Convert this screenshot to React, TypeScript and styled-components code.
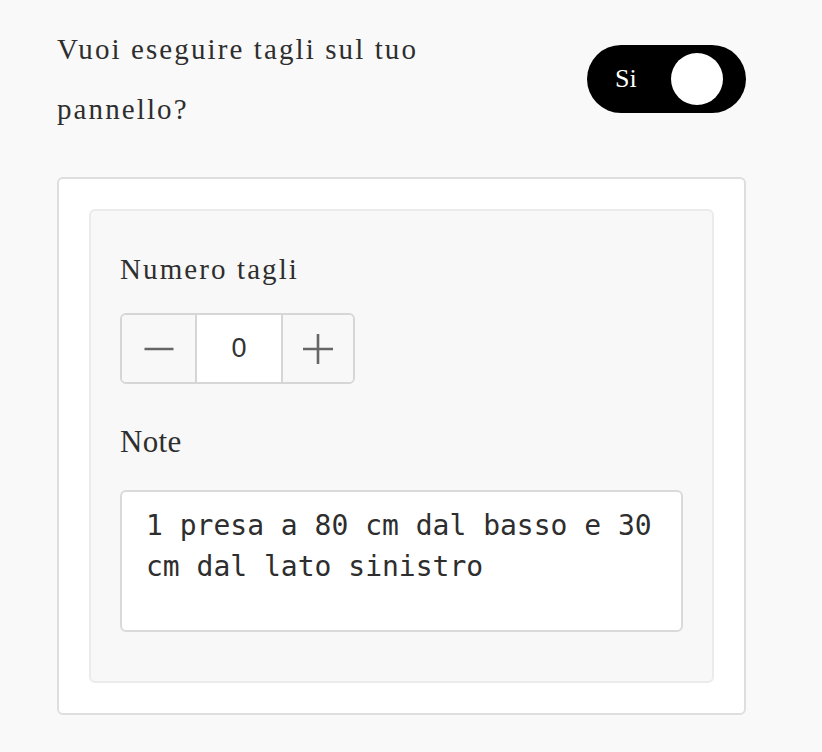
import React, { useState } from "react";
import styled, { createGlobalStyle } from "styled-components";

const GlobalStyle = createGlobalStyle`
  html, body {
    margin: 0;
    padding: 0;
    background: #f9f9f9;
  }
  body {
    font-family: "Liberation Serif", "Times New Roman", serif;
    color: #2e2e2e;
  }
`;

const Page = styled.div`
  padding: 19px 0 0 57px;
  width: 689px;
`;

const HeaderRow = styled.div`
  display: flex;
  align-items: center;
  justify-content: space-between;
`;

const Question = styled.div`
  flex: 0 1 420px;
  font-size: 29px;
  line-height: 60px;
  letter-spacing: 2.1px;
  color: #2e2e2e;
`;

const Toggle = styled.button<{ $on: boolean }>`
  width: 159px;
  height: 68px;
  border: none;
  border-radius: 34px;
  background: ${(p) => (p.$on ? "#000000" : "#cccccc")};
  display: flex;
  align-items: center;
  justify-content: space-between;
  padding: 0 23px 0 28px;
  box-sizing: border-box;
  cursor: pointer;
`;

const ToggleText = styled.span`
  font-family: "Liberation Serif", "Times New Roman", serif;
  font-size: 26px;
  color: #ffffff;
`;

const Knob = styled.span`
  width: 52px;
  height: 52px;
  border-radius: 50%;
  background: #ffffff;
`;

const Card = styled.div`
  margin-top: 38px;
  background: #ffffff;
  border: 2px solid #dedede;
  border-radius: 6px;
  padding: 30px;
`;

const Panel = styled.div`
  background: #f8f8f8;
  border: 2px solid #ebebeb;
  border-radius: 6px;
  padding: 30px 29px 49px;
`;

const Label = styled.div<{ $plain?: boolean }>`
  font-size: ${(p) => (p.$plain ? "31px" : "29px")};
  letter-spacing: ${(p) => (p.$plain ? "0.3px" : "2.1px")};
  line-height: 56px;
  color: #2e2e2e;
`;

const Stepper = styled.div`
  margin-top: 16px;
  display: inline-flex;
  border: 2px solid #d6d6d6;
  border-radius: 6px;
  overflow: hidden;
  height: 67px;
`;

const StepButton = styled.button<{ $w: number }>`
  width: ${(p) => p.$w}px;
  border: none;
  background: #f8f8f8;
  display: flex;
  align-items: center;
  justify-content: center;
  padding: 0;
  cursor: pointer;
`;

const StepValue = styled.div`
  width: 84px;
  border-left: 2px solid #d6d6d6;
  border-right: 2px solid #d6d6d6;
  background: #ffffff;
  display: flex;
  align-items: center;
  justify-content: center;
  font-family: "Liberation Sans", Arial, sans-serif;
  font-size: 27px;
  color: #333333;
`;

const NoteGroup = styled.div`
  margin-top: 30px;
`;

const NoteArea = styled.textarea`
  display: block;
  margin-top: 20px;
  width: 100%;
  height: 142px;
  box-sizing: border-box;
  border: 2px solid #dadada;
  border-radius: 6px;
  background: #ffffff;
  padding: 13px 20px 13px 24px;
  font-family: "DejaVu Sans Mono", "Liberation Mono", monospace;
  font-size: 28px;
  line-height: 41px;
  color: #2e2e2e;
  resize: none;
  outline: none;
`;

const MinusIcon = () => (
  <svg width="32" height="32" viewBox="0 0 32 32">
    <line x1="1.5" y1="16" x2="30.5" y2="16" stroke="#666666" strokeWidth="2.6" />
  </svg>
);

const PlusIcon = () => (
  <svg width="32" height="32" viewBox="0 0 32 32">
    <line x1="1" y1="16" x2="31" y2="16" stroke="#666666" strokeWidth="2.6" />
    <line x1="16" y1="1" x2="16" y2="31" stroke="#666666" strokeWidth="2.6" />
  </svg>
);

export default function App() {
  const [on, setOn] = useState(true);
  const [count, setCount] = useState(0);
  const [note, setNote] = useState("1 presa a 80 cm dal basso e 30 cm dal lato sinistro");

  return (
    <>
      <GlobalStyle />
      <Page>
        <HeaderRow>
          <Question>Vuoi eseguire tagli sul tuo pannello?</Question>
          <Toggle $on={on} onClick={() => setOn(!on)}>
            <ToggleText>Si</ToggleText>
            <Knob />
          </Toggle>
        </HeaderRow>
        <Card>
          <Panel>
            <Label>Numero tagli</Label>
            <Stepper>
              <StepButton $w={73} onClick={() => setCount(Math.max(0, count - 1))}>
                <MinusIcon />
              </StepButton>
              <StepValue>{count}</StepValue>
              <StepButton $w={70} onClick={() => setCount(count + 1)}>
                <PlusIcon />
              </StepButton>
            </Stepper>
            <NoteGroup>
              <Label $plain>Note</Label>
              <NoteArea value={note} onChange={(e) => setNote(e.target.value)} />
            </NoteGroup>
          </Panel>
        </Card>
      </Page>
    </>
  );
}
